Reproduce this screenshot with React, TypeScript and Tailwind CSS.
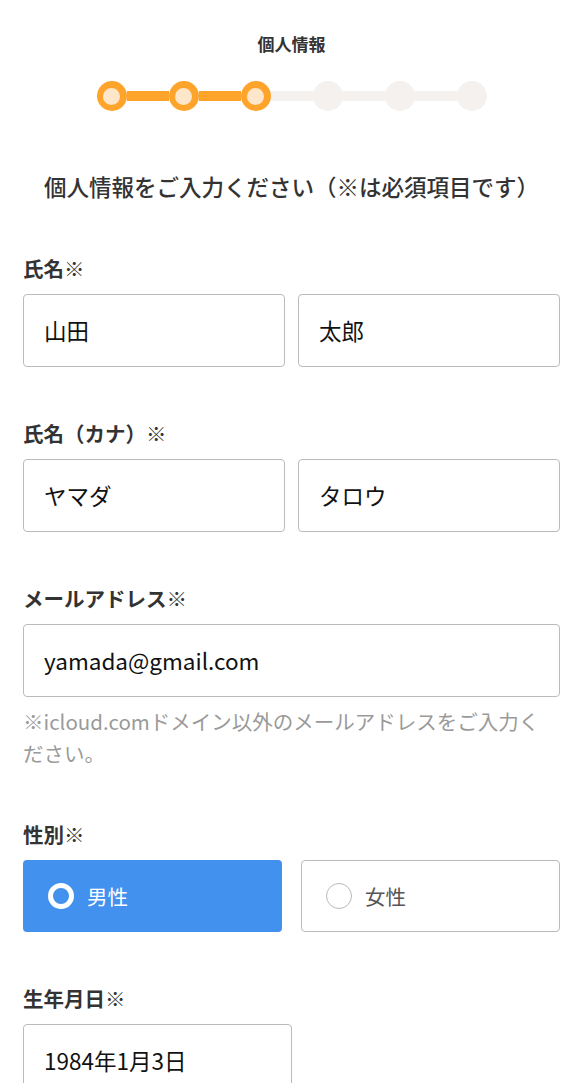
import React from "react";

const font = { fontFamily: "'Noto Sans CJK JP', 'Noto Sans', sans-serif" };

function Stepper({ current, total }: { current: number; total: number }) {
  const items = Array.from({ length: total }, (_, i) => i);
  return (
    <div className="flex items-center justify-center">
      {items.map((i) => (
        <React.Fragment key={i}>
          {i > 0 && (
            <div
              className={
                i < current
                  ? "h-[10px] w-[42px] bg-[#ffa42b]"
                  : "h-[10px] w-[42px] bg-[#f4f1ee]"
              }
            />
          )}
          {i < current ? (
            <div className="flex h-[30px] w-[30px] items-center justify-center rounded-full bg-[#ffa42b]">
              <div className="h-[17px] w-[17px] rounded-full bg-[#fde6c9]" />
            </div>
          ) : (
            <div className="h-[30px] w-[30px] rounded-full bg-[#f4f1ee]" />
          )}
        </React.Fragment>
      ))}
    </div>
  );
}

function Label({ children }: { children: React.ReactNode }) {
  return (
    <div className="mb-[14px] text-[20.5px] font-bold leading-6 text-[#333]">
      {children}
      <span className="font-normal">※</span>
    </div>
  );
}

function Field({ value, className = "" }: { value: string; className?: string }) {
  return (
    <div
      className={
        "flex h-[73px] items-center rounded-[4px] border border-[#bbbbbb] bg-white pl-5 text-[22.5px] text-[#111] " +
        className
      }
    >
      {value}
    </div>
  );
}

export default function App() {
  return (
    <div style={font} className="min-h-[1083px] bg-white px-[23px] pt-[34px] pb-10">
      <div className="text-center text-[17px] font-bold leading-5 text-[#333]">個人情報</div>
      <div className="mt-[27px]">
        <Stepper current={3} total={6} />
      </div>

      <h1 className="mt-[60px] text-center text-[22.5px] font-medium leading-[30px] text-[#333]">
        個人情報をご入力ください（※は必須項目です）
      </h1>

      <div className="mt-[55px]">
        <Label>氏名</Label>
        <div className="grid grid-cols-2 gap-[13px]">
          <Field value="山田" />
          <Field value="太郎" />
        </div>
      </div>

      <div className="mt-[54px]">
        <Label>氏名（カナ）</Label>
        <div className="grid grid-cols-2 gap-[13px]">
          <Field value="ヤマダ" />
          <Field value="タロウ" />
        </div>
      </div>

      <div className="mt-[54px]">
        <Label>メールアドレス</Label>
        <Field value="yamada@gmail.com" />
        <p className="mt-2 pr-4 text-[20.5px] leading-8 text-[#9a9a9a]">
          ※icloud.comドメイン以外のメールアドレスをご入力ください。
        </p>
      </div>

      <div className="mt-[53px]">
        <Label>性別</Label>
        <div className="grid grid-cols-2 gap-[19px]">
          <div className="flex h-[72px] items-center gap-[13px] rounded-[4px] bg-[#4391ef] pl-[25px] text-[20.5px] text-white">
            <span className="h-[26px] w-[26px] rounded-full border-[5px] border-white bg-[#4391ef]" />
            男性
          </div>
          <div className="flex h-[72px] items-center gap-[13px] rounded-[4px] border border-[#bbbbbb] bg-white pl-[24px] text-[20.5px] text-[#555]">
            <span className="h-[26px] w-[26px] rounded-full border border-[#bbbbbb] bg-white" />
            女性
          </div>
        </div>
      </div>

      <div className="mt-[54px]">
        <Label>生年月日</Label>
        <div className="w-[269px]">
          <Field value="1984年1月3日" />
        </div>
      </div>
    </div>
  );
}
